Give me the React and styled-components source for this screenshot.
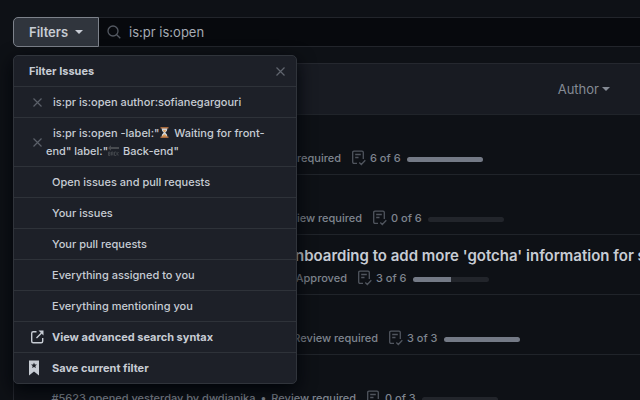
import styled, { createGlobalStyle } from 'styled-components'

const GlobalStyle = createGlobalStyle`
  * { box-sizing: border-box; }

  body {
    margin: 0;
    background: #0e1116;
    color: #c7ccd4;
    font-family: Inter, "Liberation Sans", sans-serif;
    font-size: 12px;
  }

  button, input {
    font: inherit;
    color: inherit;
  }
`

const StyledPage = styled.main`
  position: relative;
  height: 100vh;
  padding: 17px 0 0 13px;
  overflow: hidden;
`

const StyledSearch = styled.form`
  display: flex;
  height: 30px;
`

const StyledFiltersButton = styled.button`
  display: flex;
  align-items: center;
  gap: 7px;
  padding: 0 15px;
  border: 1px solid #7d828b;
  border-radius: 5px 0 0 5px;
  background: #30353d;
  font-size: 13px;
  font-weight: 600;
`

const StyledCaret = styled.span`
  border: 4px solid transparent;
  border-top-color: currentColor;
  border-bottom: 0;
`

const StyledSearchField = styled.label`
  display: flex;
  flex: 1;
  align-items: center;
  gap: 8px;
  padding-left: 8px;
  border: solid #22252b;
  border-width: 1px 0;
  background: #07090d;
  color: #545962;
`

const StyledInput = styled.input`
  flex: 1;
  min-width: 0;
  padding: 0;
  border: 0;
  outline: 0;
  background: transparent;
  color: #a5abb4;
  font-size: 13px;
`

const StyledMenu = styled.section`
  position: absolute;
  z-index: 1;
  top: 55px;
  left: 13px;
  width: 284px;
  border: 1px solid #30343b;
  border-radius: 5px;
  background: #1d2028;
  box-shadow: 0 6px 18px #010409;
`

const StyledMenuHeader = styled.header`
  display: flex;
  justify-content: space-between;
  align-items: center;
  height: 30px;
  padding: 0 11px 0 15px;

  h2 {
    margin: 0;
    font-size: 11px;
    font-weight: 700;
  }
`

const StyledCloseButton = styled.button`
  display: flex;
  padding: 0;
  border: 0;
  background: transparent;
  color: #60656e;
`

const StyledMenuItem = styled.a`
  display: flex;
  align-items: center;
  min-height: 31px;
  padding: 6px 16px 6px ${({ $icon }) => ($icon ? '15px' : '38px')};
  border-top: 1px solid #2e3239;
  color: inherit;
  font-size: 11px;
  font-weight: ${({ $bold }) => ($bold ? 700 : 500)};
  line-height: 18px;
  text-decoration: none;
`

const StyledItemIcon = styled.span`
  display: flex;
  flex: none;
  align-items: center;
  width: 23px;
  height: 16px;
`

const StyledSavedFilter = styled(StyledMenuItem)`
  gap: 4px;
  padding-left: 19px;

  > svg { flex: none; color: #5b6069; }
  > span { text-indent: 7px; }
`

const StyledEmoji = styled.svg`
  width: 11px;
  height: 11px;
  margin-right: 1px;
  vertical-align: -1px;
`

const StyledList = styled.section`
  margin-top: 16px;
  border: solid #25282f;
  border-width: 1px 0 0 1px;
  border-radius: 5px 0 0 0;
`

const StyledListHeader = styled.header`
  display: flex;
  justify-content: flex-end;
  height: 50px;
  padding-right: 30px;
  background: #181b22;
`

const StyledAuthorButton = styled.button`
  display: flex;
  align-items: center;
  gap: 3px;
  padding: 0;
  border: 0;
  background: transparent;
  color: #858b95;
  font-size: 13px;
`

const StyledRow = styled.article`
  height: 60px;
  padding: 9px 0 0 38px;
  border-top: 1px solid #20242a;
`

const StyledTitle = styled.h3`
  height: 24px;
  margin: 0;
  padding-left: ${({ $indent }) => $indent}px;
  font-size: 15px;
  font-weight: 600;
  line-height: 24px;
  white-space: nowrap;
`

const StyledMeta = styled.div`
  display: flex;
  align-items: center;
  height: 20px;
  color: #7f858f;
  font-size: 11px;
  font-weight: 500;
  white-space: nowrap;
`

const StyledStatus = styled.span`
  display: flex;
  justify-content: flex-end;
  gap: 5px;
  width: ${({ $width }) => $width}px;
`

const StyledTasks = styled.span`
  display: flex;
  align-items: center;
  gap: 4px;
  margin-left: 11px;
`

const StyledTrack = styled.span`
  width: 76px;
  height: 5px;
  margin: 2px 0 0 2px;
  border-radius: 3px;
  overflow: hidden;
  background: #22252b;
`

const StyledBar = styled.span`
  display: block;
  height: 100%;
  background: #747a86;
`

const CrossIcon = () => (
  <svg width="9" height="9" viewBox="0 0 9 9" fill="none" stroke="currentColor" strokeWidth="1.2" aria-hidden="true">
    <path d="M.5.5l8 8M8.5.5l-8 8" />
  </svg>
)

const SearchIcon = () => (
  <svg width="14" height="14" viewBox="0 0 14 14" fill="none" stroke="currentColor" strokeWidth="1.3" aria-hidden="true">
    <circle cx="6" cy="6" r="5" />
    <path d="M9.7 9.7l3.6 3.6" />
  </svg>
)

const ExternalIcon = () => (
  <svg width="16" height="14" viewBox="0 0 16 14" fill="none" stroke="currentColor" strokeWidth="1.4" aria-hidden="true">
    <path d="M7.5 1.8H4.2Q2.7 1.8 2.7 3.3v8q0 1.5 1.5 1.5h8q1.5 0 1.5-1.5V8M7.5 8l5-5" />
    <path d="M9.5.5h5v5z" fill="currentColor" stroke="none" />
  </svg>
)

const BookmarkIcon = () => (
  <svg width="10" height="16" viewBox="0 0 10 16" aria-hidden="true">
    <path d="M0 .5h10v15l-5-4-5 4z" fill="currentColor" />
    <path d="M5 2.5l.8 2 2.2.1-1.7 1.4.6 2.1L5 6.9 3.1 8.1 3.7 6 2 4.6l2.2-.1z" fill="#1d2028" />
  </svg>
)

const TasklistIcon = () => (
  <svg width="14" height="16" viewBox="0 0 14 16" fill="none" stroke="#50555e" strokeWidth="1.3" aria-hidden="true">
    <path d="M5 13.3H2Q.7 13.3.7 12V2.5Q.7 1.2 2 1.2h8q1.3 0 1.3 1.3V9M3.2 4.5h5.6M3.2 7.5h3.3M7.3 12.5l2 2 4-4.3" />
  </svg>
)

const HourglassEmoji = () => (
  <StyledEmoji viewBox="0 0 11 11" role="img" aria-label="hourglass">
    <path d="M2.5 1h6q0 3-2.2 4.5Q8.5 7 8.5 10h-6q0-3 2.2-4.5Q2.5 4 2.5 1z" fill="#cfd3d6" />
    <path d="M3.7 3.3h3.6L5.5 5.2zM3 9.7q.5-2 2.5-2.5 2 .5 2.5 2.5z" fill="#e39a4c" />
    <path d="M1.5 0h8v1.5h-8zM1.5 9.5h8V11h-8z" fill="#a5673a" />
  </StyledEmoji>
)

const BackEmoji = () => (
  <StyledEmoji viewBox="0 0 11 11" role="img" aria-label="back arrow">
    <path d="M0 3l3-2.7v1.7h8v2H3v1.7z" fill="#484b50" />
    <path d="M.5 7v3.5h1.5v-3.5zM1 8.7h1M3.5 10.5V7h1.5v3.5M3.5 9h1.5M8 7H6.5v3.5H8M9 6.8v3.7M10.7 7L9.2 8.7l1.5 1.8" fill="none" stroke="#484b50" strokeWidth=".8" />
  </StyledEmoji>
)

const links = [
  'Open issues and pull requests',
  'Your issues',
  'Your pull requests',
  'Everything assigned to you',
  'Everything mentioning you',
]

const pulls = [
  { status: 'Review required', width: 289, done: 6, total: 6 },
  { status: 'Review required', width: 310, done: 0, total: 6 },
  { title: "nboarding to add more 'gotcha' information for s", indent: 243, status: 'Approved', width: 295, done: 3, total: 6 },
  { status: 'Review required', width: 326, done: 3, total: 3 },
  { opened: '#5623 opened yesterday by dwdianika', status: 'Review required', width: 304, done: 0, total: 3 },
]

function FilterMenu() {
  return (
    <StyledMenu aria-label="Filter Issues">
      <StyledMenuHeader>
        <h2>Filter Issues</h2>
        <StyledCloseButton type="button" aria-label="Close"><CrossIcon /></StyledCloseButton>
      </StyledMenuHeader>

      <StyledSavedFilter href="#author">
        <CrossIcon />
        <span>is:pr is:open author:sofianegargouri</span>
      </StyledSavedFilter>
      <StyledSavedFilter href="#labels">
        <CrossIcon />
        <span>
          is:pr is:open -label:"<HourglassEmoji /> Waiting for front-end" label:"<BackEmoji /> Back-end"
        </span>
      </StyledSavedFilter>

      {links.map((text) => (
        <StyledMenuItem key={text} href="#filter">{text}</StyledMenuItem>
      ))}

      <StyledMenuItem href="#syntax" $icon $bold>
        <StyledItemIcon><ExternalIcon /></StyledItemIcon>
        View advanced search syntax
      </StyledMenuItem>
      <StyledMenuItem href="#save" $icon $bold>
        <StyledItemIcon><BookmarkIcon /></StyledItemIcon>
        Save current filter
      </StyledMenuItem>
    </StyledMenu>
  )
}

function PullRow({ title, indent, opened, status, width, done, total }) {
  return (
    <StyledRow>
      <StyledTitle as={title ? 'h3' : 'div'} $indent={indent || 0}>{title}</StyledTitle>
      <StyledMeta>
        <StyledStatus $width={width}>
          {opened && <span>{opened}</span>}
          {opened && <span>•</span>}
          <span>{status}</span>
        </StyledStatus>
        <StyledTasks>
          <TasklistIcon />
          {done} of {total}
          <StyledTrack>
            <StyledBar style={{ width: `${(done / total) * 100}%` }} />
          </StyledTrack>
        </StyledTasks>
      </StyledMeta>
    </StyledRow>
  )
}

export default function App() {
  return (
    <StyledPage>
      <GlobalStyle />
      <StyledSearch>
        <StyledFiltersButton type="button">Filters <StyledCaret /></StyledFiltersButton>
        <StyledSearchField>
          <SearchIcon />
          <StyledInput type="text" aria-label="Search all issues" defaultValue="is:pr is:open" />
        </StyledSearchField>
      </StyledSearch>

      <FilterMenu />

      <StyledList>
        <StyledListHeader>
          <StyledAuthorButton type="button">Author <StyledCaret /></StyledAuthorButton>
        </StyledListHeader>
        {pulls.map((pull, i) => <PullRow key={i} {...pull} />)}
      </StyledList>
    </StyledPage>
  )
}
